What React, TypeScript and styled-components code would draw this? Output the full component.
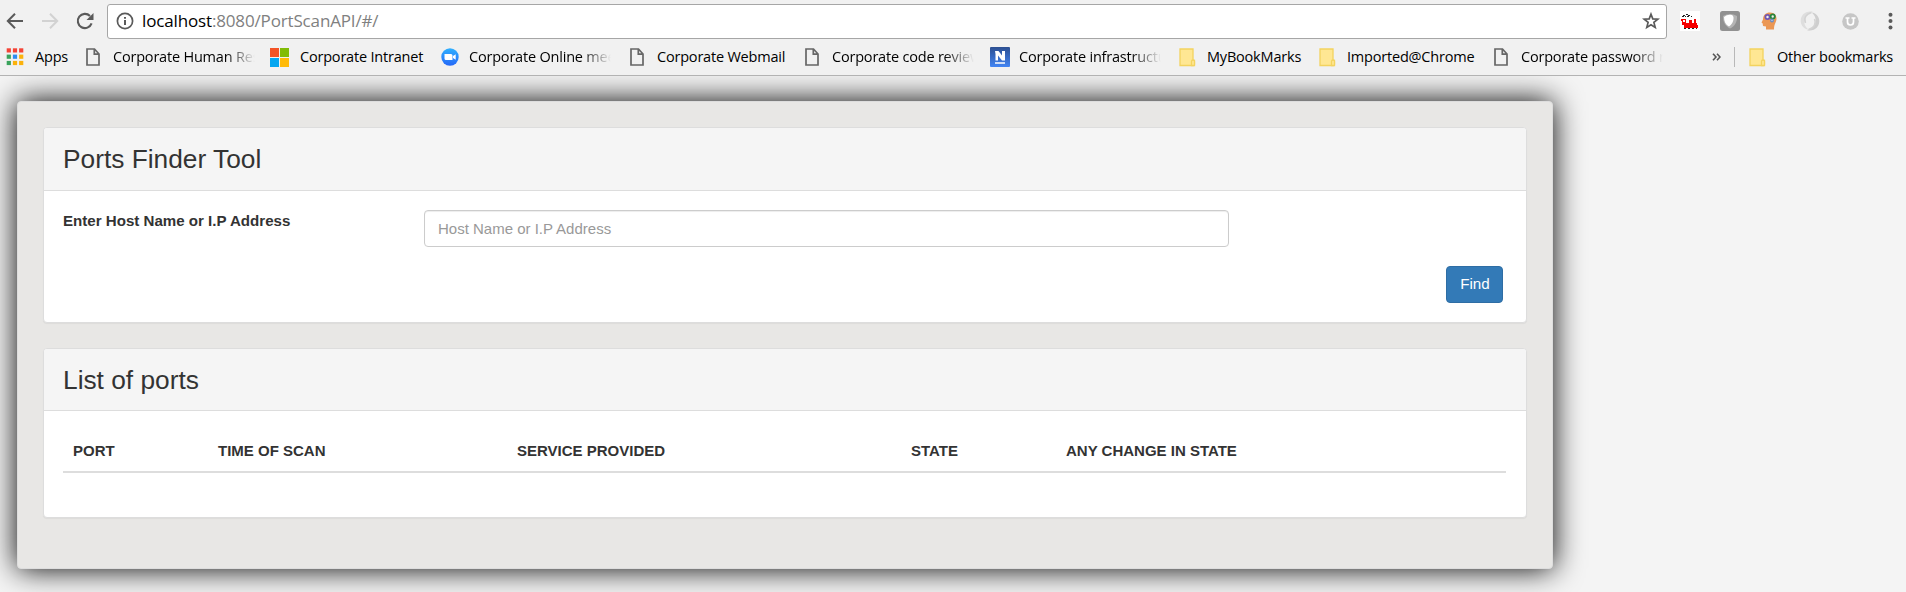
import React from 'react';
import styled, { createGlobalStyle, css } from 'styled-components';

const Global = createGlobalStyle`
  *, *::before, *::after { box-sizing: border-box; }
  html, body { margin: 0; height: 592px; overflow: hidden; background: #f4f4f4; }
  body { font: 14px/20px "Liberation Sans", Arial, sans-serif; color: #333; }
  svg { display: block; flex: none; }
`;

const Screen = styled.div`
  width: 1906px;
  height: 592px;
  overflow: hidden;
  background: #f4f4f4;
`;

const Chrome = styled.header`
  position: relative;
  z-index: 1;
  height: 76px;
  background: #f1f1f1;
  border-bottom: 1px solid #b3b3b3;
  font-family: "Open Sans", "Noto Sans", sans-serif;
`;

const Toolbar = styled.div`
  display: flex;
  align-items: center;
  height: 41px;
  padding: 1px 6px 0;
`;

const NavIcon = styled.div`
  width: 35px;
  flex: none;
`;

const AddressBar = styled.div`
  display: flex;
  align-items: center;
  width: 1560px;
  height: 35px;
  margin-left: -4px;
  padding: 0 6px 0 8px;
  background: #fff;
  border: 1px solid #a6a6a6;
  border-radius: 3px;
`;

const Url = styled.span`
  flex: 1;
  margin-left: 8px;
  padding-bottom: 1px;
  font-size: 17px;
  line-height: 24px;
  letter-spacing: -0.15px;
  color: #808080;
  white-space: nowrap;
  b { font-weight: 400; color: #000; }
`;

const Extensions = styled.div`
  display: flex;
  align-items: center;
  gap: 20px;
  margin-left: 13px;
`;

const Extension = styled.div`
  display: flex;
  justify-content: center;
  width: 20px;
`;

const BookmarkBar = styled.div`
  display: flex;
  align-items: center;
  height: 32px;
  padding-left: 6px;
`;

const Bookmark = styled.div<{ $width: number }>`
  display: flex;
  align-items: center;
  flex: none;
  width: ${(p) => p.$width}px;
`;

const IconSlot = styled.div<{ $width: number }>`
  flex: none;
  width: ${(p) => p.$width}px;
`;

const BookmarkLabel = styled.span<{ $fade?: boolean; $tracking: number }>`
  color: #000;
  font-size: 14.5px;
  line-height: 22px;
  letter-spacing: ${(p) => p.$tracking}px;
  white-space: nowrap;
  ${(p) =>
    p.$fade &&
    css`
      width: 142px;
      overflow: hidden;
      mask-image: linear-gradient(to right, #000 calc(100% - 30px), transparent);
    `}
`;

const More = styled.div`
  width: 22px;
`;

const Divider = styled.div`
  width: 1px;
  height: 20px;
  margin-right: 14px;
  background: #b8b8b8;
`;

const Container = styled.main`
  width: 1536px;
  height: 468px;
  margin: 25px 0 0 17px;
  padding: 25px;
  background: #e8e7e5;
  border: 1px solid #ddd;
  border-radius: 4px;
  box-shadow: 0 0 30px #000;
`;

const Panel = styled.section<{ $height: number }>`
  height: ${(p) => p.$height}px;
  margin-bottom: 25px;
  background: #fff;
  border: 1px solid #ddd;
  border-radius: 4px;
  box-shadow: 0 1px 1px rgba(0, 0, 0, 0.05);
`;

const PanelHeading = styled.h2<{ $height: number }>`
  height: ${(p) => p.$height}px;
  margin: 0;
  padding: 17px 19px 0;
  background: #f5f5f5;
  border-bottom: 1px solid #ddd;
  border-radius: 3px 3px 0 0;
  font-size: 26.3px;
  font-weight: 400;
  line-height: 28px;
`;

const Form = styled.form`
  display: flex;
  flex-direction: column;
  padding: 19px 23px 0 19px;
`;

const Field = styled.label`
  display: flex;
  align-items: flex-start;
`;

const FieldName = styled.span`
  width: 361px;
  padding-top: 1px;
  font-size: 15.1px;
  font-weight: 700;
`;

const Input = styled.input`
  width: 805px;
  height: 37px;
  padding: 6px 13px;
  border: 1px solid #ccc;
  border-radius: 4px;
  box-shadow: inset 0 1px 1px rgba(0, 0, 0, 0.075);
  font: 15px "Liberation Sans", Arial, sans-serif;
  &::placeholder { color: #999; opacity: 1; }
`;

const Button = styled.button`
  align-self: flex-end;
  width: 57px;
  height: 37px;
  margin-top: 19px;
  padding: 0 0 2px 1px;
  border: 1px solid #2e6da4;
  border-radius: 4px;
  background: #337ab7;
  color: #fff;
  font: 15.2px "Liberation Sans", Arial, sans-serif;
`;

const TableWrap = styled.div`
  padding: 19px 19px 0;
`;

const Table = styled.table`
  width: 1443px;
  table-layout: fixed;
  border-collapse: separate;
  border-spacing: 0;
`;

const Th = styled.th<{ $width: number }>`
  width: ${(p) => p.$width}px;
  height: 43px;
  padding: 0 10px;
  border-bottom: 2px solid #ddd;
  text-align: left;
  font-size: 15px;
  white-space: nowrap;
`;

const BackIcon = () => (
  <svg width="18" height="18" viewBox="0 0 18 18" fill="none" stroke="#5a5a5a" strokeWidth="2">
    <path d="M17 9H2.5M9 1.7 1.8 9 9 16.3" />
  </svg>
);
const ForwardIcon = () => (
  <svg width="18" height="18" viewBox="0 0 18 18" fill="none" stroke="#d2d2d2" strokeWidth="2">
    <path d="M1 9h14.5M9 1.7 16.2 9 9 16.3" />
  </svg>
);
const ReloadIcon = () => (
  <svg width="18" height="18" viewBox="0 0 18 18">
    <path d="M15.6 11.4A7.1 7.1 0 1 1 14 4" fill="none" stroke="#5a5a5a" strokeWidth="2.1" />
    <path d="M17.5 1v7h-7z" fill="#5a5a5a" />
  </svg>
);
const InfoIcon = () => (
  <svg width="18" height="18" viewBox="0 0 18 18">
    <circle cx="9" cy="9" r="7.6" fill="none" stroke="#5a5a5a" strokeWidth="1.7" />
    <path d="M8 8h2v5H8zM8 5h2v1.8H8z" fill="#5a5a5a" />
  </svg>
);
const StarIcon = () => (
  <svg width="18" height="18" viewBox="0 0 18 18">
    <path d="M9 2.200 10.800 6.900l5 .3-3.900 3.200 1.300 5L9 12.700l-4.200 2.700 1.300-5L2.200 7.200l5-.3z" fill="none" stroke="#5a5a5a" strokeWidth="1.700" />
  </svg>
);
const TrainIcon = () => (
  <svg width="20" height="20" viewBox="0 0 20 20" shapeRendering="crispEdges">
    <path d="M0 0h20v20H0z" fill="#fff" />
    <path d="M1 8h5v4h3V9h3v3h2V8h2v4h1v2h1v3H4v-3H2v-4H1z" fill="#f60000" />
    <path d="M3 9h2v2H3z" fill="#fff" />
    <path d="M2 5h2M3 4h2M5 5h1M6 3h2M7 5h2M8 4h2M11 5h1M4 17.500h2M8 17.500h2M12 17.500h2M16 17.500h1" stroke="#222" strokeWidth="1" />
  </svg>
);
const ShieldIcon = () => (
  <svg width="20" height="20" viewBox="0 0 20 20">
    <rect width="20" height="20" rx="2.500" fill="#919191" />
    <path d="M3 5q7-4 14 0c.5 6-3 11-7 12.500C5 15 3 11 3 5z" fill="#b4b4b4" />
    <path d="M4 6q3-2.500 6.500-2.200Q14 4 13.500 8q-.5 5-4.500 7.500Q4 13 4 6z" fill="#fff" />
  </svg>
);
const HeadIcon = () => (
  <svg width="20" height="20" viewBox="0 0 20 20">
    <path d="M6 18.500V15.500l-3-.5-.3-2.500L1.500 11.500 3 8.500C3 4 6 1.500 10 1.500c4.500 0 6.500 3 6.500 6 0 4-2.500 5-2.500 11z" fill="#eb9754" />
    <g fill="#eee" strokeWidth="1.800">
      <circle cx="7.500" cy="6" r="2.100" stroke="#7156b5" />
      <circle cx="12.700" cy="5.500" r="2.100" stroke="#27853b" />
      <circle cx="12" cy="9.500" r="1.300" stroke="#6b8dc4" strokeWidth="1.400" />
    </g>
  </svg>
);
const SwirlIcon = () => (
  <svg width="20" height="20" viewBox="0 0 20 20">
    <path d="M13 .8C5-1 0 5 .8 11c.5 4 3.500 7 7.500 7.500-3-3-4.500-5.500-3.800-9C5 6 8 2 13 .8z" fill="#dedede" />
    <path d="M7 19.200c8 1.800 13-4.200 12.200-10.200-.5-4-3.500-7-7.500-7.500 3 3 4.500 5.500 3.800 9C15 14 12 18 7 19.200z" fill="#cecece" />
    <path d="M11.500 1.500C6 3 3.500 7 5.500 12M8.500 18.500C14 17 16.500 13 14.500 8" fill="none" stroke="#d3d3d3" strokeWidth="1.500" />
  </svg>
);
const UIcon = () => (
  <svg width="17" height="17" viewBox="0 0 17 17">
    <circle cx="8.500" cy="8.500" r="8.300" fill="#c6c6c6" />
    <path d="M3.500 5h4M9.500 5h4M5.500 5v4c0 4 6 4 6 0V5" fill="none" stroke="#fff" strokeWidth="1.700" />
  </svg>
);
const MenuIcon = () => (
  <svg width="5" height="18" viewBox="0 0 5 18" fill="#5a5a5a">
    <circle cx="2.500" cy="2.700" r="2" />
    <circle cx="2.500" cy="9" r="2" />
    <circle cx="2.500" cy="15.500" r="2" />
  </svg>
);

const appColors = ['#f44336', '#f44336', '#f44336', '#3aa35c', '#2d8cf0', '#fbb20c', '#3aa35c', '#fbb20c', '#fbb20c'];
const AppsIcon = () => (
  <svg width="18" height="18" viewBox="0 0 18 18">
    {appColors.map((c, i) => (
      <rect key={i} x={0.7 + (i % 3) * 6.2} y={0.3 + Math.floor(i / 3) * 6.3} width="4.200" height="4.200" fill={c} />
    ))}
  </svg>
);
const PageIcon = () => (
  <svg width="14" height="18" viewBox="0 0 14 18" fill="none" stroke="#666" strokeWidth="1.700">
    <path d="M1 1h7.500L13 6v11H1zM8.300 1v5.200H13" />
  </svg>
);
const WindowsIcon = () => (
  <svg width="19" height="19" viewBox="0 0 19 19">
    <path d="M0 0h9v9H0z" fill="#f35325" />
    <path d="M10 0h9v9h-9z" fill="#81bc06" />
    <path d="M0 10h9v9H0z" fill="#05a6f0" />
    <path d="M10 10h9v9h-9z" fill="#ffba08" />
  </svg>
);
const ZoomIcon = () => (
  <svg width="18" height="18" viewBox="0 0 18 18">
    <defs>
      <linearGradient id="camera" x2="0" y2="1">
        <stop stopColor="#2fb0ff" />
        <stop offset="1" stopColor="#2568f7" />
      </linearGradient>
    </defs>
    <circle cx="9" cy="9" r="8.700" fill="url(#camera)" />
    <path d="M3.500 6H10q1.500 0 1.500 1.500V12H5q-1.500 0-1.500-1.500zM12 8l2.700-1.700v5.500L12 10z" fill="#fff" />
  </svg>
);
const NIcon = () => (
  <svg width="20" height="20" viewBox="0 0 20 20">
    <defs>
      <linearGradient id="tile" x2="0" y2="1">
        <stop stopColor="#2c4f91" />
        <stop offset="1" stopColor="#4285f4" />
      </linearGradient>
    </defs>
    <rect width="20" height="20" rx="1" fill="url(#tile)" />
    <path d="M5 4h3.500l3.500 4.500V4h3v9.500h-3L8 8.500v5H5.500V7z" fill="#fff" />
    <path d="M5 16h10" stroke="#fff" strokeWidth="1.500" />
  </svg>
);
const FolderIcon = () => (
  <svg width="17" height="19" viewBox="0 0 17 19" fill="#ffe793" stroke="#f3d35f" strokeWidth="1.300">
    <path d="M1 1h13v11.500h1.500V17.500H1z" />
    <path d="M12.500 17.500v-4q0-1.500 1.500-1.500t1.500 1.500v3q0 1-1 1z" />
  </svg>
);

type Item = { icon: React.ReactNode; slot: number; width: number; label: string; fade?: boolean; tracking?: number };
const bookmarks: Item[] = [
  { icon: <AppsIcon />, slot: 29, width: 80, label: 'Apps' },
  { icon: <PageIcon />, slot: 27, width: 184, label: 'Corporate Human Res', fade: true },
  { icon: <WindowsIcon />, slot: 30, width: 171, label: 'Corporate Intranet' },
  { icon: <ZoomIcon />, slot: 28, width: 189, label: 'Corporate Online meet', fade: true },
  { icon: <PageIcon />, slot: 27, width: 175, label: 'Corporate Webmail' },
  { icon: <PageIcon />, slot: 27, width: 185, label: 'Corporate code review', fade: true },
  { icon: <NIcon />, slot: 29, width: 189, label: 'Corporate infrastructure', fade: true },
  { icon: <FolderIcon />, slot: 28, width: 140, label: 'MyBookMarks' },
  { icon: <FolderIcon />, slot: 28, width: 175, label: 'Imported@Chrome' },
  { icon: <PageIcon />, slot: 27, width: 218, label: 'Corporate password re', fade: true },
];

const BookmarkItem = ({ icon, slot, width, label, fade, tracking = -0.2 }: Item) => (
  <Bookmark $width={width}>
    <IconSlot $width={slot}>{icon}</IconSlot>
    <BookmarkLabel $fade={fade} $tracking={tracking}>{label}</BookmarkLabel>
  </Bookmark>
);

const columns = [
  { name: 'PORT', width: 145 },
  { name: 'TIME OF SCAN', width: 299 },
  { name: 'SERVICE PROVIDED', width: 394 },
  { name: 'STATE', width: 155 },
  { name: 'ANY CHANGE IN STATE', width: 450 },
];

export default function App() {
  return (
    <Screen>
      <Global />
      <Chrome>
        <Toolbar>
          <NavIcon><BackIcon /></NavIcon>
          <NavIcon><ForwardIcon /></NavIcon>
          <NavIcon><ReloadIcon /></NavIcon>
          <AddressBar>
            <InfoIcon />
            <Url><b>localhost</b>:8080/PortScanAPI/#/</Url>
            <StarIcon />
          </AddressBar>
          <Extensions>
            <Extension><TrainIcon /></Extension>
            <Extension><ShieldIcon /></Extension>
            <Extension><HeadIcon /></Extension>
            <Extension><SwirlIcon /></Extension>
            <Extension><UIcon /></Extension>
            <Extension><MenuIcon /></Extension>
          </Extensions>
        </Toolbar>
        <BookmarkBar>
          {bookmarks.map((b) => <BookmarkItem key={b.label} {...b} />)}
          <More>
            <svg width="9" height="8" viewBox="0 0 9 8" fill="none" stroke="#555" strokeWidth="1.600">
              <path d="m1 .8 3 3.200-3 3.200M5 .8l3 3.200-3 3.200" />
            </svg>
          </More>
          <Divider />
          <BookmarkItem icon={<FolderIcon />} slot={28} width={150} label="Other bookmarks" />
        </BookmarkBar>
      </Chrome>
      <Container>
        <Panel $height={196}>
          <PanelHeading $height={63}>Ports Finder Tool</PanelHeading>
          <Form>
            <Field>
              <FieldName>Enter Host Name or I.P Address</FieldName>
              <Input placeholder="Host Name or I.P Address" />
            </Field>
            <Button type="button">Find</Button>
          </Form>
        </Panel>
        <Panel $height={170}>
          <PanelHeading $height={62}>List of ports</PanelHeading>
          <TableWrap>
            <Table>
              <thead>
                <tr>
                  {columns.map((c) => <Th key={c.name} $width={c.width}>{c.name}</Th>)}
                </tr>
              </thead>
            </Table>
          </TableWrap>
        </Panel>
      </Container>
    </Screen>
  );
}
